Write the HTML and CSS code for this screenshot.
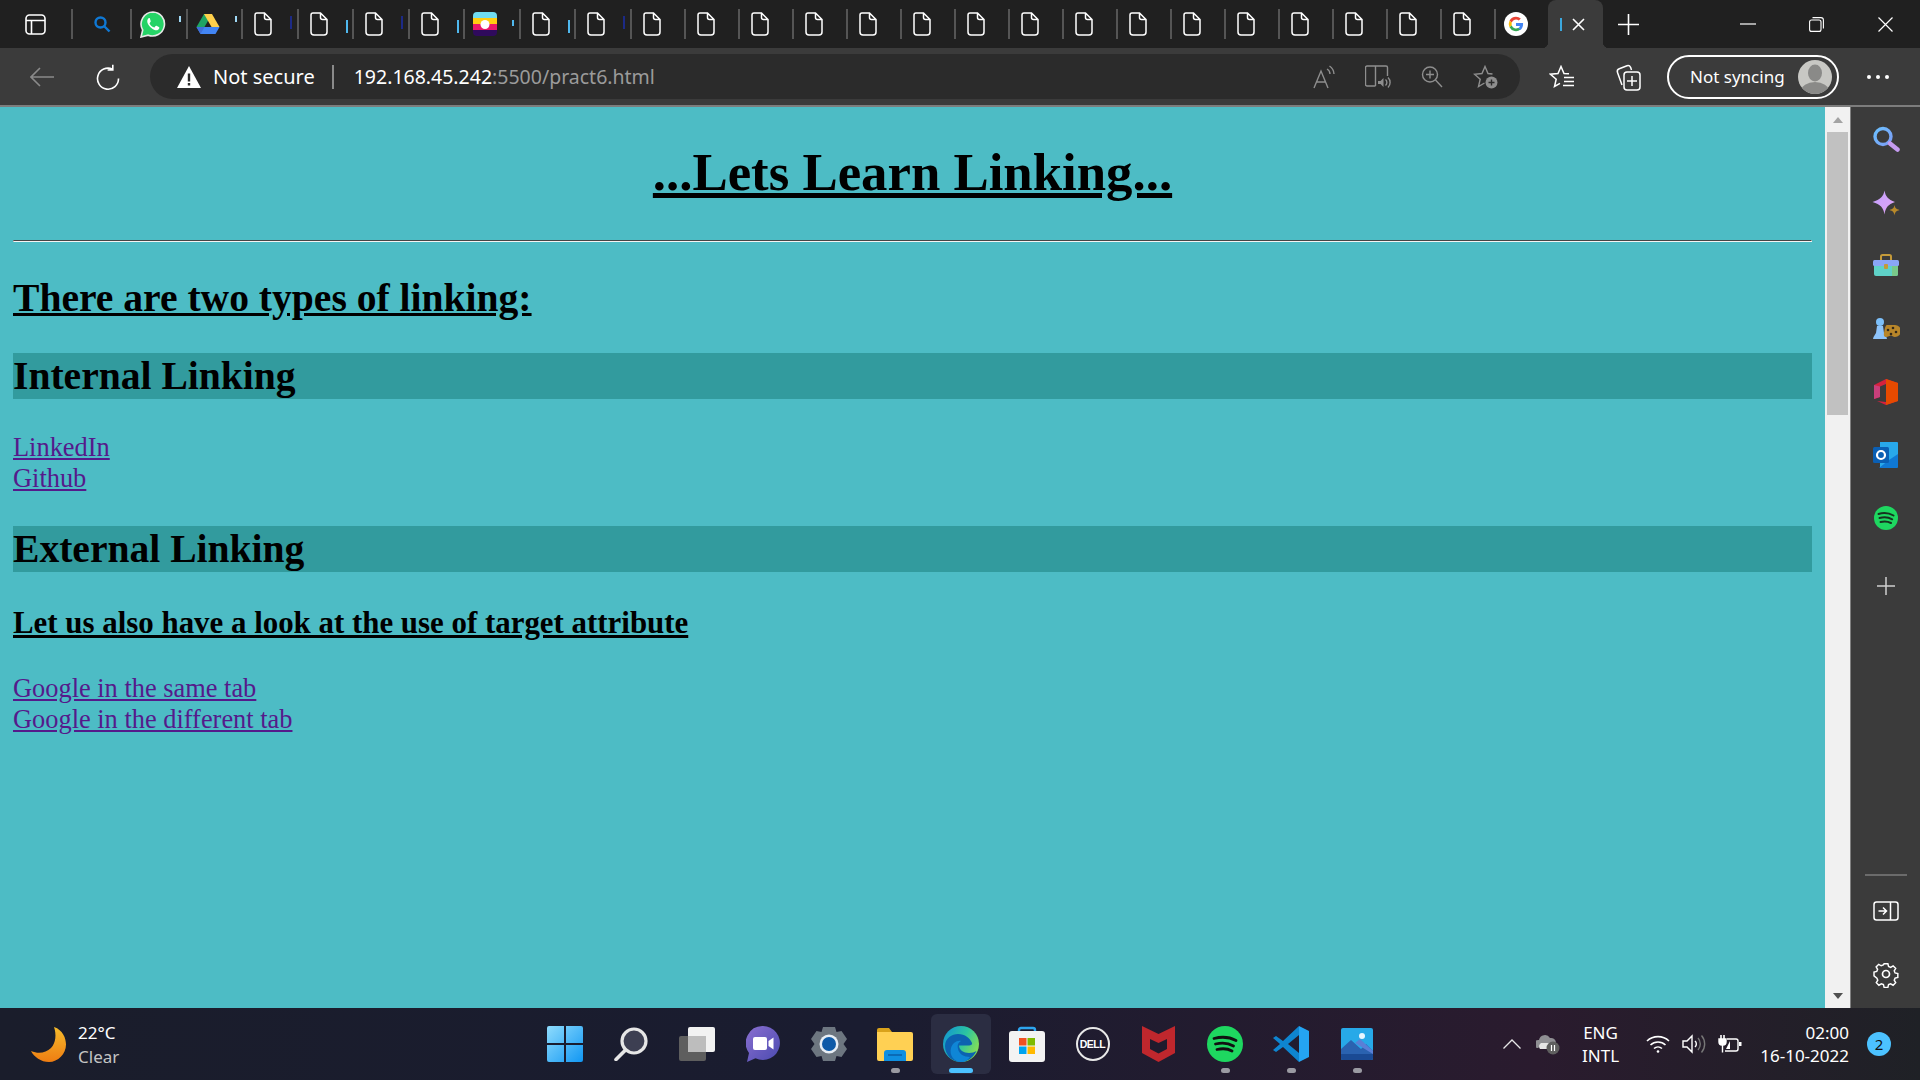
FILE: index.html
```html
<!DOCTYPE html>
<html lang="en">
<head>
    <meta charset="UTF-8">
    <meta name="viewport" content="width=device-width, initial-scale=1.0">
    <title>Lets Learn Linking</title>
    <link rel="stylesheet" href="styles.css">
</head>
<body>
    <svg class="defs" width="0" height="0">
        <symbol id="doc" viewBox="0 0 18 24">
            <path d="M3 1h7.5L17 7.5V20a3 3 0 0 1-3 3H4a3 3 0 0 1-3-3V3a2 2 0 0 1 2-2zM10.5 1v4.5a2 2 0 0 0 2 2H17" fill="none" stroke="#fff" stroke-width="1.5"/>
        </symbol>
    </svg>

    <!-- tab strip -->
    <div class="tabstrip">
        <div class="panel-btn">
            <svg width="21" height="21" viewBox="0 0 21 21" fill="none" stroke="#fff" stroke-width="1.6"><rect x="1" y="1" width="19" height="19" rx="3.5"/><path d="M1 6.5h19M6.5 6.5V20"/></svg>
        </div>
        <div class="tab tab-search">
            <svg width="18" height="18" viewBox="0 0 18 18" fill="none" stroke="#0f78d4" stroke-width="2.4"><circle cx="7.5" cy="7.5" r="5"/><path d="M11.5 11.5l5 5"/></svg>
        </div>
        <div class="tab tab-wide tab-color">
            <svg width="26" height="27" viewBox="0 0 26 27"><path d="M13 1a12 12 0 0 0-10.3 18L1 26l7.2-1.8A12 12 0 1 0 13 1z" fill="#25d366" stroke="#e8e8e8" stroke-width="1.6"/><path d="M9 7c-1 .5-2 2-1.700 4 .5 3 4.500 7.500 8 8.200 2 .4 3.500-.7 4-2 .2-.6 0-1-.5-1.300l-2.300-1.100c-.5-.2-.8 0-1.100.4l-.8 1c-.3.300-.6.300-1 .1-1.600-.7-3-2-3.900-3.600-.2-.4-.1-.7.200-1l.7-.9c.2-.3.2-.6.100-.9L9.800 7.300C9.600 6.900 9.400 6.900 9 7z" fill="#fff"/></svg>
            <i class="tick tick-white tick-short"></i>
        </div>
        <div class="tab tab-wide tab-color">
            <svg width="24" height="22" viewBox="0 0 24 22"><path d="M8 1h8L8.500 14H.5z" fill="#1fa463"/><path d="M16 1l7.500 13h-8L8 1z" fill="#ffd04b"/><path d="M.5 14l4 7h15l4-7z" fill="#4285f4"/><path d="M.5 14l4 7 4-7z" fill="#3f6fd8"/><path d="M8.500 14h7L12 8z" fill="#2a2a2a" opacity=".15"/></svg>
            <i class="tick tick-white tick-short"></i>
        </div>
        <div class="tab tab-wide"><svg class="doc"><use href="#doc"/></svg><i class="tick tick-dark"></i></div>
        <div class="tab tab-wide"><svg class="doc"><use href="#doc"/></svg><i class="tick tick-light"></i></div>
        <div class="tab tab-wide"><svg class="doc"><use href="#doc"/></svg><i class="tick tick-dark"></i></div>
        <div class="tab tab-wide"><svg class="doc"><use href="#doc"/></svg><i class="tick tick-light"></i></div>
        <div class="tab tab-wide tab-color">
            <svg width="24" height="24" viewBox="0 0 24 24"><defs><clipPath id="flag"><rect width="24" height="24" rx="4"/></clipPath></defs><g clip-path="url(#flag)"><rect width="24" height="6" fill="#6fdcf2"/><rect y="6" width="24" height="6" fill="#ffcc12"/><rect y="12" width="24" height="6" fill="#e8176a"/><rect y="18" width="24" height="6" fill="#2f0a5c"/><circle cx="12" cy="12.500" r="4.500" fill="#fff"/></g></svg>
            <i class="tick tick-light tick-short"></i>
        </div>
        <div class="tab tab-wide"><svg class="doc"><use href="#doc"/></svg><i class="tick tick-light"></i></div>
        <div class="tab tab-wide"><svg class="doc"><use href="#doc"/></svg><i class="tick tick-dark"></i></div>
        <div class="tab"><svg class="doc"><use href="#doc"/></svg></div>
        <div class="tab"><svg class="doc"><use href="#doc"/></svg></div>
        <div class="tab"><svg class="doc"><use href="#doc"/></svg></div>
        <div class="tab"><svg class="doc"><use href="#doc"/></svg></div>
        <div class="tab"><svg class="doc"><use href="#doc"/></svg></div>
        <div class="tab"><svg class="doc"><use href="#doc"/></svg></div>
        <div class="tab"><svg class="doc"><use href="#doc"/></svg></div>
        <div class="tab"><svg class="doc"><use href="#doc"/></svg></div>
        <div class="tab"><svg class="doc"><use href="#doc"/></svg></div>
        <div class="tab"><svg class="doc"><use href="#doc"/></svg></div>
        <div class="tab"><svg class="doc"><use href="#doc"/></svg></div>
        <div class="tab"><svg class="doc"><use href="#doc"/></svg></div>
        <div class="tab"><svg class="doc"><use href="#doc"/></svg></div>
        <div class="tab"><svg class="doc"><use href="#doc"/></svg></div>
        <div class="tab"><svg class="doc"><use href="#doc"/></svg></div>
        <div class="tab"><svg class="doc"><use href="#doc"/></svg></div>
        <div class="tab tab-color">
            <svg width="24" height="24" viewBox="0 0 24 24"><circle cx="12" cy="12" r="12" fill="#fff"/><path d="M12 4.800a7.200 7.200 0 0 1 4.800 1.800l-2 2A4.400 4.400 0 0 0 7.800 10.600L5.500 8.800A7.200 7.200 0 0 1 12 4.800z" fill="#ea4335"/><path d="M5.500 8.800l2.300 1.800a4.400 4.400 0 0 0 0 2.800l-2.300 1.800a7.200 7.200 0 0 1 0-6.400z" fill="#fbbc05"/><path d="M5.500 15.200l2.300-1.800a4.400 4.400 0 0 0 6.600 2.300l2.200 1.700A7.200 7.200 0 0 1 5.500 15.200z" fill="#34a853"/><path d="M19.100 12c0 2.200-.9 4.300-2.500 6l-2.200-1.700c.8-.5 1.300-1.300 1.500-2.200H12v-3h7c.1.300.1.600.1.900z" fill="#4285f4"/></svg>
        </div>
        <div class="tab-active">
            <i class="tick-active"></i>
            <svg width="13" height="13" viewBox="0 0 13 13" stroke="#fff" stroke-width="1.6"><path d="M1 1l11 11M12 1L1 12"/></svg>
        </div>
        <div class="new-tab">
            <svg width="21" height="21" viewBox="0 0 21 21" stroke="#fff" stroke-width="1.6"><path d="M10.500 0v21M0 10.500h21"/></svg>
        </div>
        <div class="window-controls">
            <div class="window-btn"><svg width="16" height="2" viewBox="0 0 16 2" stroke="#fff" stroke-width="1.2"><path d="M0 1h16"/></svg></div>
            <div class="window-btn"><svg width="15" height="15" viewBox="0 0 15 15" fill="none" stroke="#fff" stroke-width="1.1"><rect x=".6" y="3" width="11.400" height="11.400" rx="2"/><path d="M3.500 .6h8.400a2.500 2.500 0 0 1 2.500 2.500v8.400"/></svg></div>
            <div class="window-btn"><svg width="15" height="15" viewBox="0 0 15 15" stroke="#fff" stroke-width="1.2"><path d="M.5 .5l14 14M14.500 .5l-14 14"/></svg></div>
        </div>
    </div>

    <!-- address bar -->
    <div class="toolbar">
        <svg class="back" width="24" height="20" viewBox="0 0 24 20" fill="none" stroke="#8a8a8a" stroke-width="1.6"><path d="M24 10H1M10 1l-9 9 9 9"/></svg>
        <svg class="reload" width="24" height="26" viewBox="0 0 24 26" fill="none" stroke="#fff" stroke-width="1.6"><path d="M16.500 5.200A10.500 10.500 0 1 0 22.500 14.500M16.800 .8v5.200h-5.200"/></svg>
        <div class="address">
            <svg class="warn" width="24" height="22" viewBox="0 0 24 22"><path d="M12 0l12 22H0z" fill="#fff"/><path d="M10.800 7.500h2.400v8h-2.400zM10.800 17h2.400v2.500h-2.400z" fill="#2b2b2b"/></svg>
            <span class="not-secure">Not secure</span>
            <i class="address-sep"></i>
            <span class="url"><span class="url-host">192.168.45.242</span>:5500/pract6.html</span>
            <div class="address-tools">
                <svg width="22" height="24" viewBox="0 0 22 24" fill="none" stroke="#8e8e8e" stroke-width="1.4"><path d="M1 23L8 6l7 17M3.500 17h9M14 4a6 6 0 0 1 3 5M16.500 1a10 10 0 0 1 4.500 8"/></svg>
                <svg width="26" height="24" viewBox="0 0 26 24" fill="none" stroke="#8e8e8e" stroke-width="1.4"><path d="M10.500 21H2a1.500 1.500 0 0 1-1.500-1.500v-17A1.500 1.500 0 0 1 2 1h8.500v20M10.500 1H21a1.500 1.500 0 0 1 1.500 1.500V11"/><path d="M13 16h2.500l3-3v9l-3-3H13z" fill="#8e8e8e" stroke="none"/><path d="M20.500 14.500a4 4 0 0 1 0 6M23 12.500a7 7 0 0 1 0 10"/></svg>
                <svg width="22" height="24" viewBox="0 0 22 24" fill="none" stroke="#8e8e8e" stroke-width="1.4"><circle cx="9" cy="9.500" r="7.500"/><path d="M9 5.500v8M5 9.500h8M14.500 15l6.500 7"/></svg>
                <svg width="25" height="24" viewBox="0 0 25 24" fill="none" stroke="#8e8e8e" stroke-width="1.4"><path d="M19.500 9L15 8.500 12 1.500 9 8.500 1.500 9.200 7.200 14.200 5.500 21.500 11.500 18"/><circle cx="18.500" cy="17.500" r="6" fill="#8e8e8e" stroke="none"/><path d="M18.500 14.500v6M15.500 17.500h6" stroke="#2b2b2b"/></svg>
            </div>
        </div>
        <svg class="fav" width="26" height="24" viewBox="0 0 26 24" fill="none" stroke="#fff" stroke-width="1.5"><path d="M20 8.800L15 8.500 12 1.500 9 8.500 1.500 9.200 7.200 14.200 5.500 21.500 11 18.300"/><path d="M15 12.500h10M15 16.500h10M14 20.500h11"/></svg>
        <svg class="collections" width="26" height="28" viewBox="0 0 26 28" fill="none" stroke="#fff" stroke-width="1.5"><path d="M7 22L2.500 9.500a3 3 0 0 1 1.800-3.800L12 2.800a3 3 0 0 1 3.600 1.500L16.500 7"/><rect x="9" y="9" width="16" height="18" rx="3"/><path d="M17 13v10M12 18h10"/></svg>
        <div class="sync">
            <span>Not syncing</span>
            <svg class="avatar" width="34" height="34" viewBox="0 0 34 34"><defs><clipPath id="av"><circle cx="17" cy="17" r="17"/></clipPath></defs><g clip-path="url(#av)"><rect width="34" height="34" fill="#c8c8c4"/><ellipse cx="17" cy="13" rx="7" ry="8.500" fill="#8a8a88"/><ellipse cx="17" cy="31" rx="14" ry="9" fill="#8a8a88"/></g></svg>
        </div>
        <div class="more"><i></i><i></i><i></i></div>
    </div>

    <div class="main">
        <div class="page">
            <h1 class="page-title">...Lets Learn Linking...</h1>
            <hr class="page-rule">
            <h2 class="intro">There are two types of linking:</h2>
            <h2 class="band">Internal Linking</h2>
            <a class="link" href="#">LinkedIn</a><br>
            <a class="link" href="#">Github</a>
            <h2 class="band">External Linking</h2>
            <h3 class="sub">Let us also have a look at the use of target attribute</h3>
            <a class="link" href="#">Google in the same tab</a><br>
            <a class="link" href="#">Google in the different tab</a>
        </div>

        <div class="scrollbar">
            <div class="scroll-btn"><i class="arrow-up"></i></div>
            <div class="scroll-thumb"></div>
            <div class="scroll-btn scroll-btn-end"><i class="arrow-down"></i></div>
        </div>

        <div class="sidebar">
            <svg class="side-icon" viewBox="0 0 28 28"><defs><linearGradient id="lens" x1="0" y1="0" x2="1" y2="1"><stop offset="0" stop-color="#6cc0ff"/><stop offset="1" stop-color="#7b9cf5"/></linearGradient></defs><circle cx="11" cy="10.500" r="8" fill="none" stroke="url(#lens)" stroke-width="3.400"/><path d="M18 17.500l7.500 6" stroke="#c59bf0" stroke-width="4.500" stroke-linecap="round"/></svg>
            <svg class="side-icon" viewBox="0 0 28 28"><defs><linearGradient id="star" x1="0" y1="0" x2="1" y2="1"><stop offset="0" stop-color="#c2a0ff"/><stop offset="1" stop-color="#e0a4f2"/></linearGradient></defs><g transform="translate(.5 1.500)"><path d="M12 0c1 6 3.500 9 10.500 11.500C15.500 14 13 17 12 24 11 17 8 14 0 11.500 8 9 11 6 12 0z" fill="url(#star)"/><path d="M22 14.500c.6 3 1.600 4 5 5-3.400 1-4.400 2-5 5.500-.6-3.500-1.600-4.500-5-5.500 3.400-1 4.400-2 5-5z" fill="#b8892a"/></g></svg>
            <svg class="side-icon" viewBox="0 0 28 28"><path d="M9 8V4.500A1.500 1.500 0 0 1 10.500 3h7A1.500 1.500 0 0 1 19 4.500V8" fill="none" stroke="#c49a3a" stroke-width="2"/><path d="M2 13h24v9a2 2 0 0 1-2 2H4a2 2 0 0 1-2-2z" fill="#5fd2c8"/><path d="M20 13h6v9a2 2 0 0 1-2 2h-4z" fill="#79c98a"/><rect x="1" y="8" width="26" height="6" rx="1.500" fill="#8aa6f7"/><rect x="12" y="12" width="4" height="5" rx="1" fill="#c49a3a"/></svg>
            <svg class="side-icon" viewBox="0 0 28 28"><circle cx="8" cy="7" r="4" fill="#7cc0fb"/><path d="M5 11h6l1 7c1 2 2.500 3 3 6H1c.5-3 2-4 3-6z" fill="#8ec4fb"/><path d="M14 12h8a5.500 5.500 0 0 1 0 12c-2 0-3-1.500-4-1.500S15 24 13 24c-2 0-2.500-2-2-4s1-8 3-8z" fill="#b8862a" transform="translate(1 -2)"/><circle cx="16" cy="15" r="1.300" fill="#33281a"/><circle cx="21" cy="13" r="1.300" fill="#33281a"/><circle cx="24" cy="17" r="1.300" fill="#33281a"/><circle cx="19" cy="19" r="1.300" fill="#33281a"/></svg>
            <svg class="side-icon" viewBox="0 0 28 28"><path d="M2 7l12-6 12 4v18l-12 4-9-4 9 1V6L8 8.500V19l-6 2z" fill="#d4213d"/><path d="M14 1l12 4v18l-12 4z" fill="#e64a00"/><path d="M2 7l6 1.500V19l-6 2z" fill="#c93f7b"/></svg>
            <svg class="side-icon" viewBox="0 0 28 28"><path d="M8 1h17a1 1 0 0 1 1 1v24H8z" fill="#28a8ea"/><path d="M26 13v13a1 1 0 0 1-1 1H7l10-8z" fill="#0f78d4"/><rect x="1" y="6" width="16" height="16" rx="1.500" fill="#0a5fb4"/><circle cx="9" cy="14" r="4" fill="none" stroke="#fff" stroke-width="2.200"/></svg>
            <svg class="side-icon" viewBox="0 0 28 28"><circle cx="14" cy="14" r="12" fill="#1ed760"/><path d="M6.500 10c5-1.500 10.500-1 15 1.500M7.500 14c4.500-1.200 9-.8 12.700 1.300M8.500 18c3.500-.9 7.500-.6 10.500 1" fill="none" stroke="#17331f" stroke-width="2" stroke-linecap="round"/></svg>
            <svg class="side-icon side-add" viewBox="0 0 28 28" stroke="#cfcfcf" stroke-width="1.500"><path d="M14 5v18M5 14h18"/></svg>
            <i class="side-line"></i>
            <svg class="side-icon side-panel" viewBox="0 0 28 28" fill="none" stroke="#fff" stroke-width="1.500"><rect x="2" y="5" width="24" height="18" rx="2.500"/><path d="M18.500 5v18M6.500 14h8M11 10.500l3.500 3.500-3.500 3.500"/></svg>
            <svg class="side-icon" viewBox="0 0 28 28" fill="none" stroke="#fff" stroke-width="1.700"><circle cx="14" cy="14" r="3.500"/><path d="M11.800 2h4.400l.8 3.200 2.400 1 2.900-1.700 3 3-1.700 2.900 1 2.400 3.200.8v4.400l-3.200.8-1 2.400 1.700 2.900-3 3-2.900-1.700-2.400 1-.8 3.200h-4.400l-.8-3.200-2.400-1-2.900 1.700-3-3 1.700-2.900-1-2.400L0 16.200v-4.400l3.200-.8 1-2.400-1.700-2.900 3-3 2.900 1.700 2.400-1z" transform="translate(2 2) scale(.857)"/></svg>
        </div>
    </div>

    <!-- windows taskbar -->
    <div class="taskbar">
        <div class="weather">
            <svg width="35" height="35" viewBox="0 0 35 35"><defs><linearGradient id="moon" x1="0" y1="0" x2="0" y2="1"><stop offset="0" stop-color="#f5bb2c"/><stop offset="1" stop-color="#ee7d12"/></linearGradient></defs><path d="M23 0c9 3 12 11.500 12 17.500C35 27 27 35 18 35 10 35 3 30 0 24c8 3.500 15 1.500 20-3 5-5 5.500-14 3-21z" fill="url(#moon)"/></svg>
            <div class="weather-text">
                <span class="temp">22°C</span>
                <span class="sky">Clear</span>
            </div>
        </div>
        <div class="apps">
            <div class="app">
                <svg width="36" height="36" viewBox="0 0 36 36"><defs><linearGradient id="win" x1="0" y1="0" x2="1" y2="1"><stop offset="0" stop-color="#8fdcfd"/><stop offset="1" stop-color="#1197f3"/></linearGradient></defs><path d="M0 2a2 2 0 0 1 2-2h15v17H0zM19 0h15a2 2 0 0 1 2 2v15H19zM0 19h17v17H2a2 2 0 0 1-2-2zM19 19h17v15a2 2 0 0 1-2 2H19z" fill="url(#win)"/></svg>
            </div>
            <div class="app">
                <svg width="34" height="34" viewBox="0 0 34 34" fill="none"><circle cx="20" cy="14" r="12" fill="#3d3f52" stroke="#e6e6e6" stroke-width="3.200"/><path d="M11.500 23L2 32.500" stroke="#e6e6e6" stroke-width="3.600" stroke-linecap="round"/></svg>
            </div>
            <div class="app">
                <svg width="36" height="34" viewBox="0 0 36 34"><rect y="9" width="27" height="25" rx="2" fill="#5e5e5e"/><rect x="9" width="27" height="25" rx="2" fill="#f2f2f2"/><rect x="9" y="9" width="18" height="16" fill="#bdbdbd"/></svg>
            </div>
            <div class="app">
                <svg width="34" height="36" viewBox="0 0 34 36"><defs><linearGradient id="meet" x1="0" y1="0" x2="1" y2="1"><stop offset="0" stop-color="#8a6fd0"/><stop offset="1" stop-color="#4a4ab0"/></linearGradient></defs><path d="M17 0a17 17 0 1 1-7.500 32.300L1 36l2-9A17 17 0 0 1 17 0z" fill="url(#meet)"/><rect x="7" y="11" width="14" height="13" rx="2" fill="#fff"/><path d="M22.500 15l5-3.500v12l-5-3.500z" fill="#fff"/></svg>
            </div>
            <div class="app">
                <svg width="36" height="34" viewBox="0 0 36 34"><path d="M12 0h12l1.500 5 5-1L36 12l-3.500 5 3.500 5-5.500 8-5-1L24 34H12l-1.500-5-5 1L0 22l3.500-5L0 12l5.500-8 5 1z" fill="#6d7680"/><circle cx="18" cy="17" r="9.500" fill="#e8eef5"/><circle cx="18" cy="17" r="7" fill="#0f5aa8"/></svg>
            </div>
            <div class="app">
                <svg width="36" height="33" viewBox="0 0 36 33"><path d="M0 2a2 2 0 0 1 2-2h10l3 4H0z" fill="#d9a21b"/><path d="M0 4h34a2 2 0 0 1 2 2v25a2 2 0 0 1-2 2H2a2 2 0 0 1-2-2z" fill="#ffd053"/><path d="M7 33v-8a3 3 0 0 1 3-3h16a3 3 0 0 1 3 3v8z" fill="#0f8fe0"/><path d="M11 27h14" stroke="#0a5fa8" stroke-width="1.500"/></svg>
                <i class="app-dot"></i>
            </div>
            <div class="app app-active">
                <svg width="36" height="36" viewBox="0 0 36 36"><defs><linearGradient id="edge" x1="0" y1="0" x2="1" y2=".5"><stop offset="0" stop-color="#0f8fd8"/><stop offset=".6" stop-color="#2cc5a0"/><stop offset="1" stop-color="#7fdc5a"/></linearGradient></defs><circle cx="18" cy="18" r="18" fill="url(#edge)"/><path d="M2 20c0-8 7-12 13-12 7 0 12 4 14 9 .6 1.600-1 2.500-3 2.500H16c0 4.500 4.500 7.500 10 7.500 3 0 5.500-.8 7.500-2C30 32 24 36 18 36 9 36 2 29 2 20z" fill="#0c62b0"/><path d="M18 36c-7 0-12-7-10-14 1.500-5 6-8 10-7-3 2-4 4-3 8 1 5 6 8 12 8-2 3-5 5-9 5z" fill="#0f86d6"/></svg>
                <i class="app-bar"></i>
            </div>
            <div class="app">
                <svg width="36" height="36" viewBox="0 0 36 36"><path d="M10 8V4a2 2 0 0 1 2-2h12a2 2 0 0 1 2 2v4" fill="none" stroke="#2da5ef" stroke-width="2.400"/><rect y="5" width="36" height="31" rx="3" fill="#f3f3f3"/><rect x="10" y="12" width="7.500" height="7.500" fill="#f25022"/><rect x="18.500" y="12" width="7.500" height="7.500" fill="#7fba00"/><rect x="10" y="20.500" width="7.500" height="7.500" fill="#00a4ef"/><rect x="18.500" y="20.500" width="7.500" height="7.500" fill="#ffb900"/></svg>
            </div>
            <div class="app">
                <div class="dell"><span>DELL</span></div>
            </div>
            <div class="app">
                <svg width="33" height="36" viewBox="0 0 33 36"><path d="M0 0l16.500 8L33 0v27l-16.500 9L0 27z" fill="#c0272d"/><path d="M8 13l8.500 4 8.500-4v10l-8.500 4.500L8 23z" fill="#1f1b2d"/></svg>
            </div>
            <div class="app">
                <svg width="36" height="36" viewBox="0 0 36 36"><circle cx="18" cy="18" r="18" fill="#1ed760"/><path d="M7 12.500c7.500-2 15.500-1.500 22 2M8.500 18c6-1.500 13-1 18 2M10 23.500c5-1.200 11-.8 15 1.500" fill="none" stroke="#111" stroke-width="2.800" stroke-linecap="round"/></svg>
                <i class="app-dot"></i>
            </div>
            <div class="app">
                <svg width="36" height="36" viewBox="0 0 36 36"><path d="M26 0L10 15 3 10 0 12l7 6-7 6 3 2 7-5 16 15V0z" fill="#0e85d0"/><path d="M26 0l10 5v26l-10 5z" fill="#24a4f2"/><path d="M26 9v18l-11-9z" fill="#211d30"/></svg>
                <i class="app-dot"></i>
            </div>
            <div class="app">
                <svg width="32" height="32" viewBox="0 0 32 32"><defs><clipPath id="photo"><rect width="32" height="32" rx="2"/></clipPath></defs><g clip-path="url(#photo)"><rect width="32" height="32" fill="#27a9e8"/><circle cx="21" cy="8" r="3" fill="#e8f6ff"/><path d="M0 21l10-9 10 9 5-5 7 7v9H0z" fill="#2a62b0"/><path d="M14 15l5-4 13 12v3z" fill="#5a7fd6"/><rect y="26" width="32" height="6" fill="#1a4a94"/></g></svg>
                <i class="app-dot"></i>
            </div>
        </div>
        <div class="tray">
            <svg class="chevron" width="18" height="10" viewBox="0 0 18 10" fill="none" stroke="#e8e8e8" stroke-width="1.300"><path d="M.5 9.500L9 1l8.500 8.500"/></svg>
            <svg class="cloud" width="24" height="22" viewBox="0 0 24 22"><path d="M2 15a4 4 0 0 1 1-8 6 6 0 0 1 11-2 5 5 0 0 1 6 5v1H8c-2 0-3 2-6 4z" fill="#8f8f93"/><path d="M4 16a4 4 0 0 1 1-6h14v6z" fill="#e6e6e6"/><circle cx="17" cy="15" r="6.500" fill="#5f5f5f"/><path d="M15.500 12v6M18.500 12v6" stroke="#fff" stroke-width="1.200"/></svg>
            <div class="lang"><span>ENG</span><span>INTL</span></div>
            <svg class="wifi" width="24" height="18" viewBox="0 0 24 18" fill="none" stroke="#fff" stroke-width="1.600"><path d="M1 6a16 16 0 0 1 22 0M4.500 10a11 11 0 0 1 15 0M8 13.500a6 6 0 0 1 8 0"/><circle cx="12" cy="16.500" r="1.300" fill="#fff" stroke="none"/></svg>
            <svg class="speaker" width="24" height="20" viewBox="0 0 24 20" fill="none" stroke="#fff" stroke-width="1.400"><path d="M1 7h4l5-5v16l-5-5H1z"/><path d="M13 7a4 4 0 0 1 0 6"/><path d="M16 4a9 9 0 0 1 0 12M19.500 1.500a13 13 0 0 1 0 17" stroke="#777"/></svg>
            <svg class="battery" width="24" height="18" viewBox="0 0 24 18" fill="none" stroke="#fff" stroke-width="1.400"><path d="M3 0v4M6 0v4" stroke-width="1.600"/><path d="M1 4h7v3a3 3 0 0 1-3 3H4a3 3 0 0 1-3-3zM4.500 10v7.500" fill="#fff"/><path d="M9 4h9a2 2 0 0 1 2 2v8a2 2 0 0 1-2 2H7"/><path d="M21 7h2.500v4H21z" fill="#fff" stroke="none"/><path d="M8 14l4-8v8z" fill="#fff" stroke="none"/></svg>
            <div class="clock"><span>02:00</span><span>16-10-2022</span></div>
            <div class="badge">2</div>
        </div>
    </div>
</body>
</html>
```

FILE: styles.css
```css
* {
    box-sizing: border-box;
}

html,
body {
    height: 100%;
}

body {
    margin: 0;
    display: flex;
    flex-direction: column;
    height: 1080px;
    overflow: hidden;
    font-family: "Noto Sans", sans-serif;
    color: #fff;
    background-color: #202020;
}

.defs {
    display: none;
}

i {
    display: block;
}

/* tab strip */
.tabstrip {
    display: flex;
    align-items: center;
    flex: none;
    height: 48px;
    background-color: #202020;
}

.panel-btn {
    display: flex;
    width: 71px;
    padding-left: 25px;
}

.tab {
    position: relative;
    display: flex;
    align-items: center;
    flex: none;
    width: 54px;
    height: 30px;
    padding-left: 11px;
    border-left: 2px solid #555;
}

.tab-wide {
    width: 55.5px;
}

.tab-search {
    width: 59px;
    padding-left: 20px;
}

.tab-color {
    padding-left: 8px;
}

.doc {
    width: 18px;
    height: 24px;
}

.tick {
    position: absolute;
    left: 47px;
    top: 7px;
    width: 2px;
    height: 13px;
}

.tick-short {
    top: 7px;
    height: 6px;
}

.tick-white {
    background-color: #9fd8f5;
}

.tick-dark {
    background-color: #1c2a86;
}

.tick-light {
    background-color: #4fb8ee;
    top: 11px;
}

.tab-active {
    position: relative;
    display: flex;
    align-items: center;
    flex: none;
    width: 55px;
    height: 48px;
    padding-left: 12px;
    background-color: #3b3b3b;
    border-radius: 8px 8px 0 0;
}

/* the little flares where the active tab meets the toolbar */
.tab-active::before,
.tab-active::after {
    content: "";
    position: absolute;
    bottom: 0;
    width: 6px;
    height: 6px;
}

.tab-active::before {
    left: -6px;
    background: radial-gradient(circle at 0 0, transparent 6px, #3b3b3b 6.5px);
}

.tab-active::after {
    right: -6px;
    background: radial-gradient(circle at 100% 0, transparent 6px, #3b3b3b 6.5px);
}

.tick-active {
    width: 2px;
    height: 13px;
    margin-right: 10px;
    background-color: #3ba7dd;
}

.new-tab {
    display: flex;
    margin-left: 15px;
}

.window-controls {
    display: flex;
    margin-left: auto;
}

.window-btn {
    display: flex;
    align-items: center;
    justify-content: center;
    width: 69px;
    height: 48px;
}

/* address bar */
.toolbar {
    display: flex;
    align-items: center;
    flex: none;
    height: 59px;
    padding-left: 30px;
    background-color: #3b3b3b;
    border-bottom: 2px solid #7d7d7d;
}

.reload {
    margin-left: 42px;
}

.address {
    display: flex;
    align-items: center;
    width: 1370px;
    height: 45px;
    margin-left: 30px;
    padding: 0 22px 0 27px;
    background-color: #2b2b2b;
    border-radius: 23px;
}

.not-secure {
    margin-left: 12px;
    font-size: 20px;
}

.address-sep {
    width: 2px;
    height: 24px;
    margin-left: 17px;
    background-color: #8a8a8a;
}

.url {
    margin-left: 20px;
    font-size: 19.5px;
    color: #9b9b9b;
}

.url-host {
    color: #fff;
}

.address-tools {
    display: flex;
    align-items: center;
    gap: 30px;
    margin-left: auto;
}

.fav {
    margin-left: 29px;
}

.collections {
    margin-left: 40px;
}

.sync {
    display: flex;
    align-items: center;
    justify-content: space-between;
    width: 172px;
    height: 44px;
    margin-left: 26px;
    padding: 0 5px 0 21px;
    border: 2px solid #fff;
    border-radius: 22px;
    font-size: 17px;
}

.more {
    display: flex;
    gap: 5px;
    margin-left: 28px;
}

.more i {
    width: 4px;
    height: 4px;
    border-radius: 50%;
    background-color: #fff;
}

/* viewport */
.main {
    display: flex;
    flex: 1;
    min-height: 0;
}

.page {
    flex: 1;
    min-width: 0;
    padding: 0 13px;
    overflow: hidden;
    background-color: #4dbcc5;
    color: #000;
    font-family: "Liberation Serif", serif;
    font-size: 26.4px;
}

.page-title {
    margin: 35px 0 37.5px;
    font-size: 52.8px;
    text-align: center;
    text-decoration: underline;
}

.page-rule {
    margin: 0 0 33px;
    border: 1px inset #eee;
    border-top-color: #9a9a9a;
    border-bottom-color: #f4f4f4;
}

.intro {
    margin: 32.9px 0;
    font-size: 39.6px;
    text-decoration: underline;
}

.band {
    margin: 31.7px 0 32.9px;
    font-size: 39.6px;
    background-color: #329b9e;
}

.sub {
    margin: 30.9px 0 32px;
    font-size: 30.9px;
    text-decoration: underline;
}

.link {
    color: #551a8b;
}

.scrollbar {
    display: flex;
    flex-direction: column;
    flex: none;
    width: 25px;
    background-color: #f1f1f1;
}

.scroll-btn {
    display: flex;
    align-items: center;
    justify-content: center;
    height: 25px;
}

.scroll-btn-end {
    margin-top: auto;
}

.scroll-thumb {
    height: 283px;
    margin: 0 2px;
    background-color: #c1c1c1;
}

.arrow-up {
    border: solid transparent;
    border-width: 0 5.5px 6px;
    border-bottom-color: #a3a3a3;
}

.arrow-down {
    border: solid transparent;
    border-width: 6px 5.5px 0;
    border-top-color: #505050;
}

.sidebar {
    display: flex;
    flex-direction: column;
    align-items: center;
    flex: none;
    gap: 35px;
    width: 70px;
    padding: 19px 0 20px;
    background-color: #3b3b3b;
    border-left: 1px solid #808080;
}

.side-icon {
    flex: none;
    width: 28px;
    height: 28px;
}

.side-add {
    margin-top: 5px;
}

.side-line {
    width: 42px;
    height: 2px;
    margin-top: auto;
    background-color: #6b6b6b;
}

.side-panel {
    margin-top: -14px;
}

/* taskbar */
.taskbar {
    display: flex;
    align-items: center;
    flex: none;
    height: 72px;
    background: linear-gradient(90deg, #1a1d2b 0%, #1a1c30 45%, #2a1b2e 80%, #1f2126 100%);
}

.weather {
    display: flex;
    align-items: center;
    flex: none;
    width: 531.5px;
    padding-left: 31px;
}

.weather-text {
    display: flex;
    flex-direction: column;
    margin: 2px 0 0 12px;
    font-size: 17px;
    line-height: 24px;
}

.sky {
    color: #c4c4c4;
}

.apps {
    display: flex;
    align-items: center;
}

.app {
    position: relative;
    display: flex;
    align-items: center;
    justify-content: center;
    width: 66px;
    height: 60px;
}

.app-active::before {
    content: "";
    position: absolute;
    top: 0;
    left: 3px;
    width: 60px;
    height: 60px;
    border-radius: 6px;
    background-color: #2b2d42;
}

.app-active svg {
    position: relative;
}

.app-dot {
    position: absolute;
    bottom: 1px;
    left: 29px;
    width: 9px;
    height: 5px;
    border-radius: 3px;
    background-color: #9a9aa2;
}

.app-bar {
    position: absolute;
    bottom: 1px;
    left: 21px;
    width: 24px;
    height: 5px;
    border-radius: 3px;
    background-color: #4cc2ff;
}

.dell {
    display: flex;
    align-items: center;
    justify-content: center;
    width: 34px;
    height: 34px;
    border: 2px solid #e8e8e8;
    border-radius: 50%;
    font-family: "Liberation Sans", sans-serif;
    font-size: 10.5px;
    font-weight: bold;
    letter-spacing: -0.5px;
}

.tray {
    display: flex;
    align-items: center;
    flex: none;
    width: 417px;
    margin-left: auto;
    padding-right: 29px;
    font-size: 17px;
}

.cloud {
    margin-left: 15px;
}

.lang {
    display: flex;
    flex-direction: column;
    align-items: center;
    margin-left: 22px;
    line-height: 23px;
}

.wifi {
    margin-left: 27px;
}

.speaker,
.battery {
    margin-left: 12px;
}

.clock {
    display: flex;
    flex-direction: column;
    align-items: flex-end;
    margin-left: auto;
    line-height: 23px;
}

.badge {
    display: flex;
    align-items: center;
    justify-content: center;
    width: 24px;
    height: 24px;
    margin-left: 18px;
    border-radius: 50%;
    background-color: #4cc2ff;
    color: #111;
    font-size: 15px;
}
```
